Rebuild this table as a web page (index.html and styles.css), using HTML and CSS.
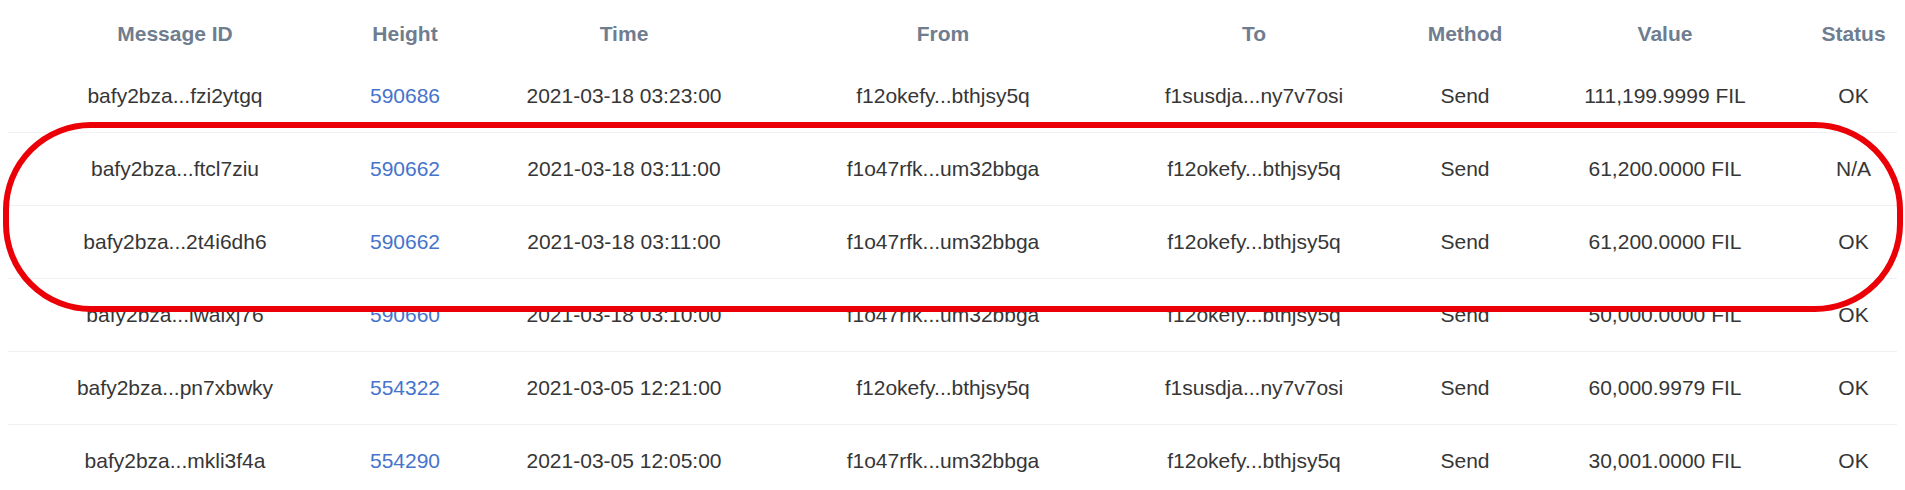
FILE: index.html
```html
<!DOCTYPE html>
<html lang="en">
<head>
<meta charset="utf-8">
<title>Messages</title>
<link rel="stylesheet" href="styles.css">
</head>
<body>
<div class="msg-table">
  <div class="row head">
    <div>Message ID</div><div>Height</div><div>Time</div><div>From</div><div>To</div><div>Method</div><div>Value</div><div>Status</div>
  </div>
  <div class="row">
    <div>bafy2bza...fzi2ytgq</div><div><a class="link">590686</a></div><div>2021-03-18 03:23:00</div><div>f12okefy...bthjsy5q</div><div>f1susdja...ny7v7osi</div><div>Send</div><div>111,199.9999 FIL</div><div>OK</div>
  </div>
  <div class="row">
    <div>bafy2bza...ftcl7ziu</div><div><a class="link">590662</a></div><div>2021-03-18 03:11:00</div><div>f1o47rfk...um32bbga</div><div>f12okefy...bthjsy5q</div><div>Send</div><div>61,200.0000 FIL</div><div>N/A</div>
  </div>
  <div class="row">
    <div>bafy2bza...2t4i6dh6</div><div><a class="link">590662</a></div><div>2021-03-18 03:11:00</div><div>f1o47rfk...um32bbga</div><div>f12okefy...bthjsy5q</div><div>Send</div><div>61,200.0000 FIL</div><div>OK</div>
  </div>
  <div class="row">
    <div>bafy2bza...lwalxj76</div><div><a class="link">590660</a></div><div>2021-03-18 03:10:00</div><div>f1o47rfk...um32bbga</div><div>f12okefy...bthjsy5q</div><div>Send</div><div>50,000.0000 FIL</div><div>OK</div>
  </div>
  <div class="row">
    <div>bafy2bza...pn7xbwky</div><div><a class="link">554322</a></div><div>2021-03-05 12:21:00</div><div>f12okefy...bthjsy5q</div><div>f1susdja...ny7v7osi</div><div>Send</div><div>60,000.9979 FIL</div><div>OK</div>
  </div>
  <div class="row">
    <div>bafy2bza...mkli3f4a</div><div><a class="link">554290</a></div><div>2021-03-05 12:05:00</div><div>f1o47rfk...um32bbga</div><div>f12okefy...bthjsy5q</div><div>Send</div><div>30,001.0000 FIL</div><div>OK</div>
  </div>
</div>
<div class="highlight"></div>
</body>
</html>
```
FILE: styles.css
```css
html, body {
  background: #ffffff;
}
body {
  margin: 8px;
  font-family: "Liberation Sans", Arial, sans-serif;
  font-size: 21px;
  color: #363636;
  overflow: hidden;
}
.msg-table {
  display: flex;
  flex-direction: column;
  margin-right: -8px;
}
.row {
  display: grid;
  grid-template-columns: 334px 126px 312px 326px 296px 126px 274px 1fr;
  align-items: center;
  height: 73px;
  box-sizing: border-box;
  border-bottom: 1px solid #f0f1f3;
}
.row > div {
  text-align: center;
  white-space: nowrap;
}
.row.head {
  height: 52px;
  border-bottom: none;
  font-weight: bold;
  color: #6f7d8f;
}
.link {
  color: #4673cc;
  text-decoration: none;
}
.highlight {
  position: absolute;
  left: 3px;
  top: 122px;
  width: 1900px;
  height: 190px;
  box-sizing: border-box;
  border: 6px solid #ec0008;
  border-radius: 88px;
  pointer-events: none;
}
```
